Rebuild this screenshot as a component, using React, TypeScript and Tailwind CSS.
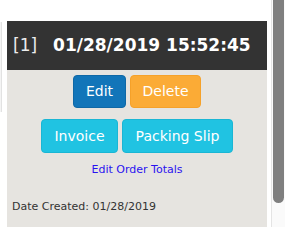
export default function App() {
  return (
    <div className="flex h-[227px] w-[285px] overflow-hidden bg-white font-['DejaVu_Sans',Verdana,sans-serif]">
      {/* left edge of the neighbouring column */}
      <div className="w-[7px] shrink-0 pt-[22px]">
        <div className="h-[90px] w-[2px] border-r border-[#e2e2e2] bg-[#f4f4f4]" />
      </div>

      <div className="mt-[21px] flex w-[260px] shrink-0 flex-col">
        <div className="flex h-[49px] items-center bg-[#333333] pl-[6px] text-[17px] text-white">
          <span className="text-[#ececec]">[1]</span>
          <span className="ml-[16px] font-bold">01/28/2019 15:52:45</span>
        </div>
        <div className="flex flex-1 flex-col items-center bg-[#e6e4e0] pt-[5px]">
          <div className="flex gap-[4px]">
            <button className="h-[33px] w-[53px] rounded-[4px] border border-[#0f68a6] bg-[#1275b9] text-[14px] text-white">
              Edit
            </button>
            <button className="h-[33px] w-[71px] rounded-[4px] border border-[#f5a12a] bg-[#fbab36] text-[14px] text-white">
              Delete
            </button>
          </div>
          <div className="mt-[11px] flex gap-[4px]">
            <button className="h-[34px] w-[77px] rounded-[4px] border border-[#1ab6d4] bg-[#20c3e2] text-[14px] text-white">
              Invoice
            </button>
            <button className="h-[34px] w-[111px] rounded-[4px] border border-[#1ab6d4] bg-[#20c3e2] text-[14px] text-white">
              Packing Slip
            </button>
          </div>
          <a className="mt-[9px] text-[11px] text-[#2a12f0]">Edit Order Totals</a>
          <div className="mt-[20px] self-start pl-[5px] text-[11px] text-[#333333]">
            Date Created: 01/28/2019
          </div>
        </div>
      </div>

      <div className="w-[4px] shrink-0" />
      <div className="w-px shrink-0 bg-[#e4e4e4]" />
      <div className="flex-1 bg-[#fafafa] pl-[1px] pr-[1px]">
        <div className="h-[203px] rounded-b-[6px] bg-[#7f7f7f]" />
      </div>
    </div>
  );
}
